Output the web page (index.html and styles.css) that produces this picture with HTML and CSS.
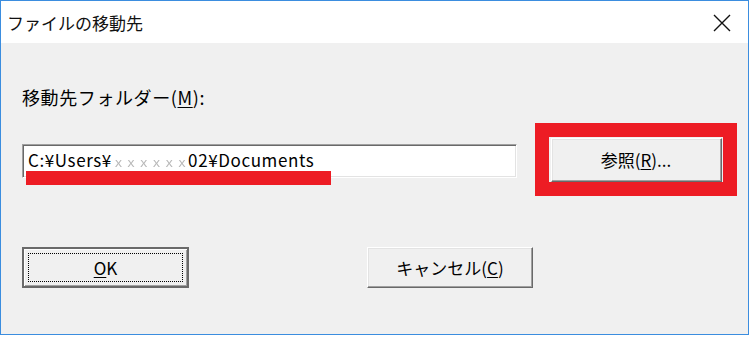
FILE: index.html
```html
<!DOCTYPE html>
<html lang="ja">
<head>
    <meta charset="UTF-8">
    <title>ファイルの移動先</title>
    <link rel="stylesheet" href="styles.css">
</head>
<body>
    <div class="window">
        <div class="titlebar">
            <span class="title">ファイルの移動先</span>
            <svg class="close" width="20" height="18" viewBox="0 0 20 18">
                <path d="M2 1 L18 17 M18 1 L2 17" stroke="#111" stroke-width="1.4" fill="none"/>
            </svg>
        </div>
        <div class="content">
            <div class="label">移動先フォルダー(<u>M</u>):</div>
            <div class="path-row">
                <div class="field-wrap">
                    <div class="field">C:¥Users¥<span class="masked">ｘｘｘｘｘｘ</span>02¥Documents</div>
                    <div class="underline"></div>
                </div>
                <div class="highlight">
                    <button class="btn browse">参照(<u>R</u>)...</button>
                </div>
            </div>
            <div class="button-row">
                <button class="btn default"><span class="focus"><u>O</u>K</span></button>
                <button class="btn cancel">キャンセル(<u>C</u>)</button>
            </div>
        </div>
    </div>
</body>
</html>
```

FILE: styles.css
```css
body {
    margin: 0;
    background-color: #fff;
    font-family: 'Noto Sans CJK JP', 'Noto Sans', sans-serif;
    color: #000;
}
.window {
    width: 747px;
    height: 333px;
    border: 1px solid #3b8ddf;
    background-color: #f0f0f0;
    display: flex;
    flex-direction: column;
}
.titlebar {
    height: 42px;
    background-color: #fff;
    display: flex;
    align-items: center;
    justify-content: space-between;
    padding: 0 16px 0 6px;
}
.title {
    font-size: 17px;
    color: #111;
}
.close {
    display: block;
    margin-top: 1px;
}
.content {
    padding-left: 21px;
    display: flex;
    flex-direction: column;
}
.label {
    margin-top: 42px;
    font-size: 18px;
    letter-spacing: 0.6px;
    line-height: 24px;
    height: 24px;
}
.label u {
    text-underline-offset: 2px;
}
.path-row {
    margin-top: 14px;
    display: flex;
    align-items: flex-start;
}
.field-wrap {
    position: relative;
    margin-top: 21px;
}
.field {
    width: 495px;
    height: 34px;
    box-sizing: border-box;
    background-color: #fff;
    border-top: 1px solid #a0a0a0;
    border-left: 1px solid #a0a0a0;
    border-bottom: 1px solid #fff;
    border-right: 1px solid #fff;
    box-shadow: inset 1px 1px 0 #696969, inset -1px -1px 0 #e3e3e3;
    padding: 0 0 0 5px;
    font-size: 17px;
    letter-spacing: 0.6px;
    line-height: 30px;
    white-space: nowrap;
    overflow: hidden;
}
.masked {
    color: #b8b8b8;
    font-size: 13px;
    letter-spacing: -0.3px;
    filter: blur(0.5px);
}
.underline {
    position: absolute;
    left: 4px;
    top: 27px;
    width: 305px;
    height: 14px;
    background-color: #ed1c24;
}
.highlight {
    margin-left: 18px;
    width: 174px;
    height: 45px;
    border: 14px solid #ed1c24;
    display: flex;
    align-items: center;
    justify-content: center;
}
.btn {
    box-sizing: border-box;
    background-color: #f0f0f0;
    font-family: 'Noto Sans CJK JP', 'Noto Sans', sans-serif;
    font-size: 17px;
    color: #000;
    padding: 0;
    border-top: 1px solid #fff;
    border-left: 1px solid #fff;
    border-bottom: 1px solid #696969;
    border-right: 1px solid #696969;
    box-shadow: inset -1px -1px 0 #a0a0a0, inset 1px 1px 0 #e3e3e3;
    display: flex;
    align-items: center;
    justify-content: center;
}
.btn u {
    text-underline-offset: 2px;
}
.browse {
    width: 171px;
    height: 44px;
}
.button-row {
    margin-top: 51px;
    display: flex;
}
.default {
    width: 167px;
    height: 41px;
    border: 2px solid #6a6a6a;
    box-shadow: inset 1px 1px 0 #fff, inset -1px -1px 0 #a0a0a0;
}
.focus {
    width: 153px;
    height: 27px;
    border: 1px dotted #000;
    display: flex;
    align-items: center;
    justify-content: center;
}
.cancel {
    margin-left: 178px;
    width: 166px;
    height: 41px;
}
```
